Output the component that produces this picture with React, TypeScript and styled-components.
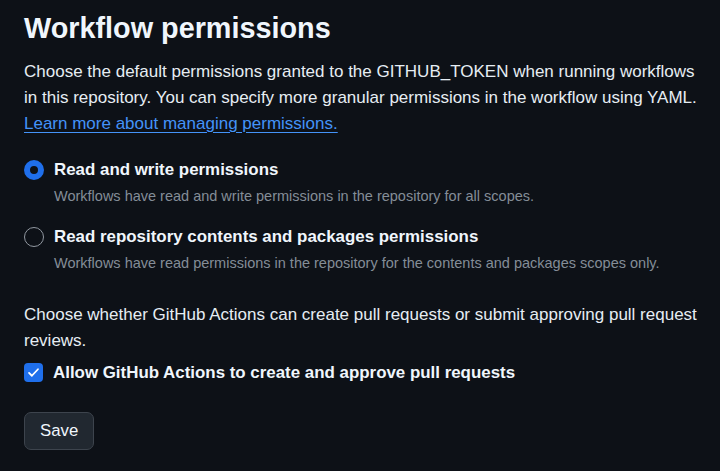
import React, { useState } from 'react';
import styled, { createGlobalStyle } from 'styled-components';

const GlobalStyle = createGlobalStyle`
  html, body {
    margin: 0;
    padding: 0;
    background: #0d1117;
  }
  body {
    font-family: "Liberation Sans", Arial, sans-serif;
    color: #e6edf3;
  }
`;

const Page = styled.div`
  width: 720px;
  height: 471px;
  box-sizing: border-box;
  padding: 10px 8px 0 24px;
  background: #0d1117;
  overflow: hidden;
`;

const Title = styled.h2`
  margin: 0 0 13px 0;
  font-size: 28.8px;
  line-height: 36px;
  font-weight: 700;
  color: #f0f6fc;
`;

const Text = styled.p`
  margin: 0;
  font-size: 17px;
  line-height: 25.8px;
  color: #e6edf3;
`;

const Link = styled.a`
  color: #4493f8;
  text-decoration: underline;
  text-decoration-thickness: 1px;
  text-underline-offset: 3px;
  cursor: pointer;
`;

const Options = styled.div`
  display: flex;
  flex-direction: column;
  gap: 17px;
  margin: 21px 0 28px 0;
`;

const Option = styled.label`
  display: grid;
  grid-template-columns: 20px 1fr;
  column-gap: 10px;
  align-items: center;
  cursor: pointer;
`;

const Radio = styled.span<{ $checked: boolean }>`
  box-sizing: border-box;
  width: 20px;
  height: 20px;
  border-radius: 50%;
  border: ${(p) => (p.$checked ? '6.5px solid #1f6feb' : '1px solid #9198a1')};
  background: ${(p) => (p.$checked ? '#0d1117' : 'transparent')};
`;

const Label = styled.span`
  font-size: 16.9px;
  line-height: 25px;
  font-weight: 700;
  color: #f0f6fc;
`;

const Note = styled.span`
  grid-column: 2;
  font-size: 14.5px;
  line-height: 22px;
  color: #848d97;
  margin-top: 3px;
`;

const CheckRow = styled.label`
  display: flex;
  align-items: center;
  gap: 10px;
  margin-top: 6px;
  cursor: pointer;
`;

const Box = styled.span<{ $checked: boolean }>`
  box-sizing: border-box;
  width: 19px;
  height: 19px;
  border-radius: 4px;
  display: flex;
  align-items: center;
  justify-content: center;
  background: ${(p) => (p.$checked ? '#1f6feb' : 'transparent')};
  border: ${(p) => (p.$checked ? 'none' : '1px solid #9198a1')};
`;

const Button = styled.button`
  margin-top: 27px;
  box-sizing: border-box;
  height: 38px;
  padding: 0 15px;
  font-family: "Liberation Sans", Arial, sans-serif;
  font-size: 16.8px;
  color: #f0f6fc;
  background: #212830;
  border: 1px solid #3d444d;
  border-radius: 7px;
  cursor: pointer;
`;

const options = [
  {
    id: 'write',
    label: 'Read and write permissions',
    note: 'Workflows have read and write permissions in the repository for all scopes.',
  },
  {
    id: 'read',
    label: 'Read repository contents and packages permissions',
    note: 'Workflows have read permissions in the repository for the contents and packages scopes only.',
  },
];

export default function App() {
  const [perm, setPerm] = useState('write');
  const [allow, setAllow] = useState(true);

  return (
    <Page>
      <GlobalStyle />
      <Title>Workflow permissions</Title>
      <Text>
        Choose the default permissions granted to the GITHUB_TOKEN when running workflows
        <br />
        in this repository. You can specify more granular permissions in the workflow using YAML.
        <br />
        <Link>Learn more about managing permissions.</Link>
      </Text>

      <Options>
        {options.map((o) => (
          <Option key={o.id} onClick={() => setPerm(o.id)}>
            <Radio $checked={perm === o.id} />
            <Label>{o.label}</Label>
            <Note>{o.note}</Note>
          </Option>
        ))}
      </Options>

      <Text>
        Choose whether GitHub Actions can create pull requests or submit approving pull request
        <br />
        reviews.
      </Text>
      <CheckRow onClick={() => setAllow(!allow)}>
        <Box $checked={allow}>
          {allow && (
            <svg width="13" height="13" viewBox="0 0 16 16" fill="none">
              <path d="M2.5 8.5 L6 12 L13.5 4" stroke="#fff" strokeWidth="2.2" strokeLinecap="round" strokeLinejoin="round" />
            </svg>
          )}
        </Box>
        <Label>Allow GitHub Actions to create and approve pull requests</Label>
      </CheckRow>

      <Button>Save</Button>
    </Page>
  );
}
